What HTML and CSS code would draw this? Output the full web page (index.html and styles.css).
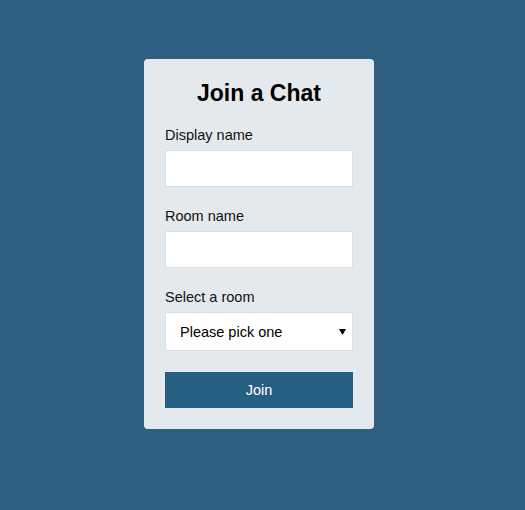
FILE: index.html
```html
<!DOCTYPE html>
<html lang="en">
<head>
<meta charset="utf-8">
<title>Join a Chat</title>
<link rel="stylesheet" href="styles.css">
</head>
<body>
<main class="page">
  <form class="card">
    <h1 class="title">Join a Chat</h1>
    <label class="label" for="display">Display name</label>
    <input class="field" id="display" type="text">
    <label class="label" for="room">Room name</label>
    <input class="field" id="room" type="text">
    <label class="label" for="select">Select a room</label>
    <div class="select-wrap">
      <select class="select" id="select">
        <option>Please pick one</option>
      </select>
      <svg class="arrow" width="7" height="6" viewBox="0 0 7 6"><path d="M0 0H7L3.5 6Z" fill="#000"/></svg>
    </div>
    <button class="btn" type="button">Join</button>
  </form>
</main>
</body>
</html>
```
FILE: styles.css
```css
html, body {
  margin: 0;
  padding: 0;
}
body {
  background: #2e5e80;
  font-family: "Liberation Sans", Arial, sans-serif;
  color: #111;
  min-height: 510px;
}
.page {
  display: flex;
  padding: 59px 0 0 144px;
}
.card {
  width: 230px;
  box-sizing: border-box;
  background: #e4e9ed;
  border-radius: 4px;
  padding: 20px 21px 21px;
  display: flex;
  flex-direction: column;
}
.title {
  margin: 0 0 20px;
  font-size: 23px;
  line-height: 28px;
  font-weight: bold;
  text-align: center;
  color: #000;
}
.label {
  font-size: 14.5px;
  line-height: 16px;
  margin-bottom: 7px;
  color: #111;
}
.field {
  display: block;
  box-sizing: border-box;
  width: 188px;
  height: 37px;
  margin: 0 0 21px;
  border: 1px solid #dadee2;
  background: #fff;
  padding: 0 10px;
  font-family: inherit;
  font-size: 14px;
  outline: none;
}
.select-wrap {
  position: relative;
  margin-bottom: 21px;
}
.select {
  display: block;
  box-sizing: border-box;
  width: 188px;
  height: 39px;
  border: 1px solid #dadee2;
  background: #fff;
  padding: 0 14px;
  font-family: inherit;
  font-size: 14.5px;
  color: #000;
  appearance: none;
  -webkit-appearance: none;
  border-radius: 0;
  outline: none;
}
.arrow {
  position: absolute;
  right: 7px;
  top: 17px;
  pointer-events: none;
}
.btn {
  display: block;
  width: 188px;
  height: 36px;
  border: none;
  background: #275f82;
  color: #fff;
  font-family: inherit;
  font-size: 14.5px;
  cursor: pointer;
}
```
